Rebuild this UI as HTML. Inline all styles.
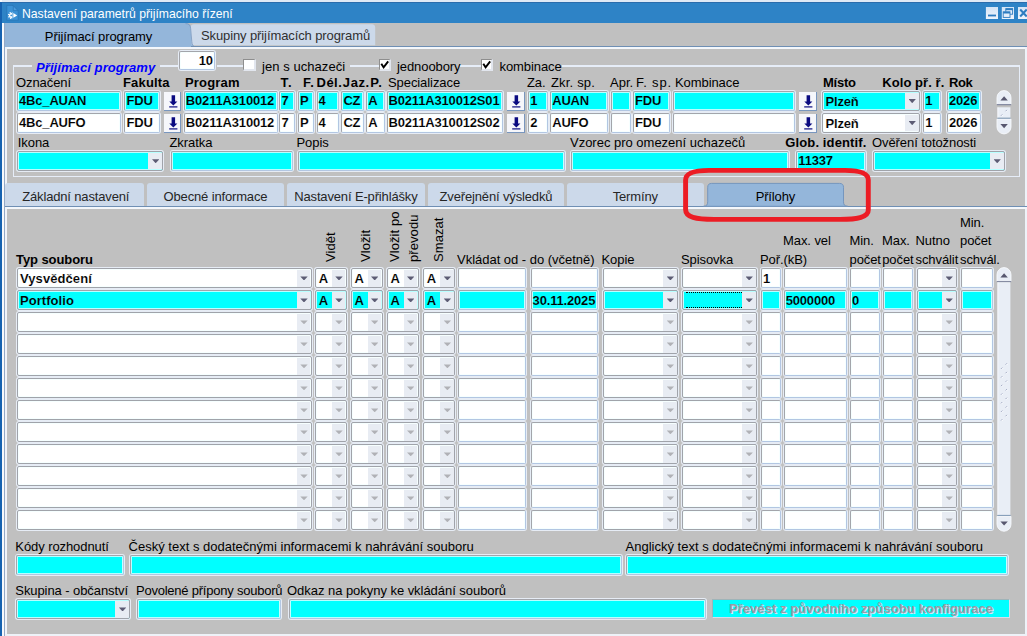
<!DOCTYPE html><html><head><meta charset="utf-8"><title>Nastavení parametrů přijímacího řízení</title><style>
html,body{margin:0;padding:0;}
body{width:1027px;height:636px;overflow:hidden;background:#c0c0c0;font-family:"Liberation Sans",sans-serif;font-size:12px;color:#000;position:relative;}
.a{position:absolute;white-space:nowrap;}
.f{position:absolute;box-sizing:border-box;border:1px solid #a3a5ab;border-right-color:#b2c6e2;border-bottom-color:#b2c6e2;border-radius:2px;box-shadow:0 0 0 1px #e6ecf5,inset 0 0 0 0.8px #f4ffff;font-weight:bold;font-size:13px;line-height:20px;padding-left:1px;letter-spacing:-0.17px;white-space:nowrap;overflow:hidden;height:20px;}
.l{position:absolute;white-space:nowrap;font-size:13px;line-height:14px;letter-spacing:-0.08px;}
.b{font-weight:bold;}
.btn{position:absolute;box-sizing:border-box;width:17.8px;height:18.6px;background:#f6f7fb;border-right:1px solid #7896be;border-bottom:1px solid #7896be;}
.dd{position:absolute;right:0.5px;top:0.8px;bottom:0.8px;width:13.5px;background:#e8ecf3;}
.dd:after{content:"";position:absolute;left:3.5px;top:6.300px;width:7.400px;height:4.100px;background:#5c5c74;clip-path:polygon(0 0,100% 0,50% 100%);}
.dd.dis:after{background:#b0b1b6;height:3.8px;}
.cb{padding-left:2.5px;border-color:#a0a3aa;}
.t{line-height:18px;}
.cb.t{line-height:19.5px;}
.tab{position:absolute;box-sizing:border-box;text-align:center;font-size:13px;}
</style></head><body>
<div class="a" style="left:0;top:0;width:1027px;height:23.1px;background:#2e83c6;"></div>
<div class="a" style="left:0;top:0;width:1027px;height:1.6px;background:#dfe9f5;"></div>
<div class="a" style="left:0;top:1.6px;width:1027px;height:1.2px;background:#2a6cac;"></div>
<div class="a" style="left:1.7px;top:23.1px;width:2.5px;height:613px;background:#f7f9fc;"></div>
<div class="a" style="left:4.2px;top:23.1px;width:0.8px;height:613px;background:#93a8c6;"></div>
<div class="a" style="left:0;top:0;width:1.7px;height:636px;background:#1662b0;"></div>
<div class="a" style="left:0;top:0;width:2px;height:2px;background:#f7f9fc;"></div>
<svg class="a" style="left:0;top:0" width="24" height="24" viewBox="0 0 24 24"><path d="M6.800 5.400h6.200l5.200 5.400v9.400h-11.400z" fill="#3b92d6" stroke="#2874b6" stroke-width="0.7"/><path d="M13.300 5.800v4.800h4.600z" fill="#4a9cdc" stroke="#2874b6" stroke-width="0.7"/><clipPath id="gc"><rect x="6" y="11" width="6.400" height="9"/></clipPath><g clip-path="url(#gc)"><circle cx="11.500" cy="15.400" r="2.900" fill="none" stroke="#fff" stroke-width="1.400" stroke-dasharray="1.200 1.080"/><circle cx="11.500" cy="15.400" r="2.500" fill="#fff"/><circle cx="11.200" cy="15.400" r="0.900" fill="#3b92d6"/></g><path d="M13.300 13.100l3.900 2.300l-3.900 2.400z" fill="#fff"/></svg>
<div class="a" style="left:22px;top:6.200px;color:#fff;font-size:12.2px;line-height:16px;">Nastavení parametrů přijímacího řízení</div>
<svg class="a" style="left:984px;top:5px" width="43" height="16" viewBox="0 0 43 16"><defs><linearGradient id="wb" x1="0" y1="0" x2="0" y2="1"><stop offset="0" stop-color="#d4e4f6"/><stop offset="1" stop-color="#eef4fc"/></linearGradient></defs><rect x="1.900" y="2" width="12.100" height="12" fill="url(#wb)"/><rect x="4" y="9.600" width="8" height="1.800" fill="#2e7cc0"/><rect x="17.800" y="2" width="12.200" height="12" fill="url(#wb)"/><rect x="21.800" y="3.600" width="6.800" height="5.600" fill="#e4eefa" stroke="#2e7cc0" stroke-width="0.900"/><rect x="21.800" y="3.600" width="6.800" height="1.600" fill="#2e7cc0"/><rect x="19.200" y="6.800" width="6.800" height="5.600" fill="#e4eefa" stroke="#2e7cc0" stroke-width="0.900"/><rect x="19.200" y="6.800" width="6.800" height="1.700" fill="#2e7cc0"/><rect x="34" y="2" width="12" height="12" fill="url(#wb)"/><path d="M36.200 4.500l6.500 7M42.700 4.500l-6.500 7" stroke="#2e7cc0" stroke-width="2"/></svg>
<svg class="a" style="left:5px;top:23px" width="375" height="24" viewBox="0 0 375 24"><path d="M186.400 22.5v-18.500c0-2-1-2.900-3-2.900h-183.400" fill="none"/><path d="M0 0.100h180.500c3.500 0 5 1.500 5.300 4.500l1.200 14c0.300 3 1 4.400 3 5.400h-190z" fill="#94b6da"/><path d="M186.800 22.300l-1.300-17c-0.200-2.500 1-4.100 3.500-4.100h178c1.800 0 3.200 1.200 3.200 3v18.100z" fill="#ccd9ea"/><path d="M180.500 0.600c3.500 0 4.800 1.500 5.100 4.500l1.200 13.500c0.300 3 1 4.400 3 5.400" fill="none" stroke="#7a98bf" stroke-width="0.8"/></svg>
<div class="tab" style="left:7px;top:23px;width:183px;height:24px;line-height:27.5px;font-size:13px;letter-spacing:-0.1px;">Přijímací programy</div>
<div class="tab" style="left:195px;top:24px;width:181px;height:22px;line-height:24px;font-size:13px;color:#303030;letter-spacing:-0.1px;">Skupiny přijímacích programů</div>
<div class="a" style="left:5px;top:46.900px;width:1022px;height:2.1px;background:#f4f7fb;"></div>
<div class="a" style="left:191px;top:46px;width:836px;height:1px;background:#6f8fb4;"></div>
<div class="a" style="left:5px;top:46.900px;width:2px;height:587px;background:#f1f4f9;"></div>
<div class="a" style="left:5px;top:633.6px;width:1022px;height:2.4px;background:#eef2f8;"></div>
<div class="a" style="left:1024.8px;top:47px;width:2.2px;height:589px;background:#eef2f8;"></div>
<div class="a" style="left:13px;top:65.300px;width:1007.1px;height:112.2px;box-sizing:border-box;border:1.7px solid #e6edf8;border-top:none;"></div>
<div class="a" style="left:13.0px;top:65.300px;width:18.8px;height:1.7px;background:#e6edf8;"></div>
<div class="a" style="left:159.7px;top:65.300px;width:18.3px;height:1.7px;background:#e6edf8;"></div>
<div class="a" style="left:216.5px;top:65.300px;width:27.2px;height:1.7px;background:#e6edf8;"></div>
<div class="a" style="left:349.6px;top:65.300px;width:29.4px;height:1.7px;background:#e6edf8;"></div>
<div class="a" style="left:460.3px;top:65.300px;width:20.7px;height:1.7px;background:#e6edf8;"></div>
<div class="a" style="left:562.0px;top:65.300px;width:458.1px;height:1.7px;background:#e6edf8;"></div>
<div class="a b" style="left:36px;top:59.500px;color:#0000ff;font-style:italic;font-size:13px;line-height:16px;letter-spacing:0.08px;">Přijímací programy</div>
<div class="f" style="left:178.800px;top:51.3px;width:36.5px;height:19px;background:#fff;text-align:right;padding-right:1.5px;line-height:18.5px;-webkit-text-stroke:0.12px #fff;">10</div>
<div class="a" style="left:243.3px;top:59.0px;width:12.4px;height:12.2px;background:#fff;border:1px solid #8e8e8e;border-right:2px solid #e2e6ee;border-bottom:2px solid #e2e6ee;box-sizing:border-box;"></div>
<div class="l" style="left:262.0px;top:60.3px;letter-spacing:0.06px;">jen s uchazeči</div>
<div class="a" style="left:378.8px;top:58.8px;width:12.4px;height:12.2px;background:#fff;border:1px solid #8e8e8e;border-right:2px solid #e2e6ee;border-bottom:2px solid #e2e6ee;box-sizing:border-box;"></div>
<svg class="a" style="left:378.8px;top:58.8px" width="12" height="12" viewBox="0 0 12 12"><path d="M2.300 4.700l2.300 3.600l4.600-6" fill="none" stroke="#000" stroke-width="1.900"/></svg>
<div class="l" style="left:397.0px;top:60.1px;letter-spacing:-0.08px;">jednoobory</div>
<div class="a" style="left:480.9px;top:58.8px;width:12.4px;height:12.2px;background:#fff;border:1px solid #8e8e8e;border-right:2px solid #e2e6ee;border-bottom:2px solid #e2e6ee;box-sizing:border-box;"></div>
<svg class="a" style="left:480.9px;top:58.8px" width="12" height="12" viewBox="0 0 12 12"><path d="M2.300 4.700l2.300 3.600l4.600-6" fill="none" stroke="#000" stroke-width="1.900"/></svg>
<div class="l" style="left:499.5px;top:60.1px;letter-spacing:-0.08px;">kombinace</div>
<div class="l" style="left:16.0px;top:76px;letter-spacing:-0.08px;">Označení</div>
<div class="l b" style="left:123.0px;top:76px;letter-spacing:0.17px;">Fakulta</div>
<div class="l b" style="left:185.0px;top:76px;letter-spacing:0.17px;">Program</div>
<div class="l b" style="left:280.6px;top:76px;letter-spacing:1.00px;">T.</div>
<div class="l b" style="left:303.0px;top:76px;letter-spacing:0.80px;">F.</div>
<div class="l b" style="left:316.5px;top:76px;letter-spacing:0.50px;">Dél.</div>
<div class="l b" style="left:342.8px;top:76px;letter-spacing:0.60px;">Jaz.</div>
<div class="l b" style="left:370.3px;top:76px;letter-spacing:1.00px;">P.</div>
<div class="l" style="left:388.0px;top:76px;letter-spacing:-0.08px;">Specializace</div>
<div class="l" style="left:527.0px;top:76px;letter-spacing:-0.08px;">Za.</div>
<div class="l" style="left:551.0px;top:76px;letter-spacing:0.17px;">Zkr. sp.</div>
<div class="l" style="left:610.0px;top:76px;letter-spacing:0.00px;">Apr.</div>
<div class="l" style="left:636.0px;top:76px;letter-spacing:0.80px;">F. sp.</div>
<div class="l" style="left:675.0px;top:76px;letter-spacing:-0.08px;">Kombinace</div>
<div class="l b" style="left:823.0px;top:76px;letter-spacing:-0.25px;">Místo</div>
<div class="l b" style="left:882.3px;top:76px;letter-spacing:0.06px;">Kolo př. ř.</div>
<div class="l b" style="left:949.0px;top:76px;letter-spacing:-0.40px;">Rok</div>
<div class="f t" style="left:17.0px;top:91px;width:104.0px;background:#00ffff;-webkit-text-stroke:0.12px #00ffff;">4Bc_AUAN</div>
<div class="f t" style="left:124.4px;top:91px;width:35.3px;background:#00ffff;-webkit-text-stroke:0.12px #00ffff;">FDU</div>
<div class="btn" style="left:163.7px;top:92.4px;"><svg style="position:absolute;left:0;top:0" width="17" height="18" viewBox="0 0 17 18"><path d="M7.600 3.300h3.500v6.100h2.300l-4.050 4l-4.050-4h2.300z" fill="#0a0a80"/><rect x="5.200" y="14.300" width="8.200" height="1.200" fill="#0a0a80"/></svg></div>
<div class="f t" style="left:183.8px;top:91px;width:94.4px;background:#00ffff;-webkit-text-stroke:0.12px #00ffff;">B0211A310012</div>
<div class="f t" style="left:279.4px;top:91px;width:16.0px;background:#00ffff;-webkit-text-stroke:0.12px #00ffff;">7</div>
<div class="f t" style="left:298.0px;top:91px;width:15.6px;background:#00ffff;-webkit-text-stroke:0.12px #00ffff;">P</div>
<div class="f t" style="left:316.6px;top:91px;width:22.4px;background:#00ffff;-webkit-text-stroke:0.12px #00ffff;">4</div>
<div class="f t" style="left:341.4px;top:91px;width:23.0px;background:#00ffff;-webkit-text-stroke:0.12px #00ffff;">CZ</div>
<div class="f t" style="left:366.2px;top:91px;width:19.0px;background:#00ffff;-webkit-text-stroke:0.12px #00ffff;">A</div>
<div class="f t" style="left:386.5px;top:91px;width:116.9px;background:#00ffff;-webkit-text-stroke:0.12px #00ffff;">B0211A310012S01</div>
<div class="btn" style="left:506.8px;top:92.4px;"><svg style="position:absolute;left:0;top:0" width="17" height="18" viewBox="0 0 17 18"><path d="M7.600 3.300h3.500v6.100h2.300l-4.050 4l-4.050-4h2.300z" fill="#0a0a80"/><rect x="5.200" y="14.300" width="8.200" height="1.200" fill="#0a0a80"/></svg></div>
<div class="f t" style="left:528.3px;top:91px;width:19.7px;background:#00ffff;-webkit-text-stroke:0.12px #00ffff;">1</div>
<div class="f t" style="left:550.2px;top:91px;width:57.5px;background:#00ffff;-webkit-text-stroke:0.12px #00ffff;">AUAN</div>
<div class="f t" style="left:611.0px;top:91px;width:20.0px;background:#00ffff;-webkit-text-stroke:0.12px #00ffff;"></div>
<div class="f t" style="left:633.0px;top:91px;width:37.0px;background:#00ffff;-webkit-text-stroke:0.12px #00ffff;">FDU</div>
<div class="f t" style="left:673.0px;top:91px;width:122.0px;background:#00ffff;-webkit-text-stroke:0.12px #00ffff;"></div>
<div class="btn" style="left:798.8px;top:92.4px;"><svg style="position:absolute;left:0;top:0" width="17" height="18" viewBox="0 0 17 18"><path d="M7.600 3.300h3.500v6.100h2.300l-4.050 4l-4.050-4h2.300z" fill="#0a0a80"/><rect x="5.200" y="14.300" width="8.200" height="1.200" fill="#0a0a80"/></svg></div>
<div class="f cb t" style="left:822.0px;top:91.0px;width:98.0px;height:20px;background:#00ffff;-webkit-text-stroke:0.12px #00ffff;">Plzeň<div class="dd"></div></div>
<div class="f t" style="left:923.2px;top:91px;width:17.5px;background:#00ffff;-webkit-text-stroke:0.12px #00ffff;">1</div>
<div class="f t" style="left:947.0px;top:91px;width:33.5px;background:#00ffff;-webkit-text-stroke:0.12px #00ffff;">2026</div>
<div class="f t" style="left:17.0px;top:113px;width:104.0px;background:#ffffff;-webkit-text-stroke:0.12px #ffffff;">4Bc_AUFO</div>
<div class="f t" style="left:124.4px;top:113px;width:35.3px;background:#ffffff;-webkit-text-stroke:0.12px #ffffff;">FDU</div>
<div class="btn" style="left:163.7px;top:114.4px;"><svg style="position:absolute;left:0;top:0" width="17" height="18" viewBox="0 0 17 18"><path d="M7.600 3.300h3.500v6.100h2.300l-4.050 4l-4.050-4h2.300z" fill="#0a0a80"/><rect x="5.200" y="14.300" width="8.200" height="1.200" fill="#0a0a80"/></svg></div>
<div class="f t" style="left:183.8px;top:113px;width:94.4px;background:#ffffff;-webkit-text-stroke:0.12px #ffffff;">B0211A310012</div>
<div class="f t" style="left:279.4px;top:113px;width:16.0px;background:#ffffff;-webkit-text-stroke:0.12px #ffffff;">7</div>
<div class="f t" style="left:298.0px;top:113px;width:15.6px;background:#ffffff;-webkit-text-stroke:0.12px #ffffff;">P</div>
<div class="f t" style="left:316.6px;top:113px;width:22.4px;background:#ffffff;-webkit-text-stroke:0.12px #ffffff;">4</div>
<div class="f t" style="left:341.4px;top:113px;width:23.0px;background:#ffffff;-webkit-text-stroke:0.12px #ffffff;">CZ</div>
<div class="f t" style="left:366.2px;top:113px;width:19.0px;background:#ffffff;-webkit-text-stroke:0.12px #ffffff;">A</div>
<div class="f t" style="left:386.5px;top:113px;width:116.9px;background:#ffffff;-webkit-text-stroke:0.12px #ffffff;">B0211A310012S02</div>
<div class="btn" style="left:506.8px;top:114.4px;"><svg style="position:absolute;left:0;top:0" width="17" height="18" viewBox="0 0 17 18"><path d="M7.600 3.300h3.500v6.100h2.300l-4.050 4l-4.050-4h2.300z" fill="#0a0a80"/><rect x="5.200" y="14.300" width="8.200" height="1.200" fill="#0a0a80"/></svg></div>
<div class="f t" style="left:528.3px;top:113px;width:19.7px;background:#ffffff;-webkit-text-stroke:0.12px #ffffff;">2</div>
<div class="f t" style="left:550.2px;top:113px;width:57.5px;background:#ffffff;-webkit-text-stroke:0.12px #ffffff;">AUFO</div>
<div class="f t" style="left:611.0px;top:113px;width:20.0px;background:#ffffff;-webkit-text-stroke:0.12px #ffffff;"></div>
<div class="f t" style="left:633.0px;top:113px;width:37.0px;background:#ffffff;-webkit-text-stroke:0.12px #ffffff;">FDU</div>
<div class="f t" style="left:673.0px;top:113px;width:122.0px;background:#ffffff;-webkit-text-stroke:0.12px #ffffff;"></div>
<div class="btn" style="left:798.8px;top:114.4px;"><svg style="position:absolute;left:0;top:0" width="17" height="18" viewBox="0 0 17 18"><path d="M7.600 3.300h3.500v6.100h2.300l-4.050 4l-4.050-4h2.300z" fill="#0a0a80"/><rect x="5.200" y="14.300" width="8.200" height="1.200" fill="#0a0a80"/></svg></div>
<div class="f cb t" style="left:822.0px;top:113.0px;width:98.0px;height:20px;background:#ffffff;-webkit-text-stroke:0.12px #ffffff;">Plzeň<div class="dd"></div></div>
<div class="f t" style="left:923.2px;top:113px;width:17.5px;background:#ffffff;-webkit-text-stroke:0.12px #ffffff;">1</div>
<div class="f t" style="left:947.0px;top:113px;width:33.5px;background:#ffffff;-webkit-text-stroke:0.12px #ffffff;">2026</div>
<svg class="a" style="left:995.7px;top:89.6px" width="17" height="45" viewBox="0 0 17 45"><path d="M1.0 14.4v-6.800a6.600 6.600 0 0 1 14.0 0v6.800z" fill="#e9eef6" stroke="#f7f9fd" stroke-width="0.9"/><path d="M0.8 14.7h14.4" stroke="#5f6684" stroke-width="0.9"/><path d="M4.4 10.5l3.700-4.200l3.700 4.200z" fill="#57576f"/><path d="M1.0 29.1v7.800a6.600 6.600 0 0 0 14.0 0v-7.800z" fill="#e9eef6" stroke="#f7f9fd" stroke-width="0.9"/><path d="M4.4 34.1l3.700 4.200l3.700-4.200z" fill="#57576f"/><rect x="1.6" y="17.3" width="12.8" height="10.5" fill="#e9eef6"/><path d="M1.9 17.3v10.5" stroke="#f7f9fd" stroke-width="0.9"/><path d="M1.4 28.2h13.2" stroke="#7896b8" stroke-width="0.9"/><path d="M9.6 21.2l1.300-1.300M5.0 25.7l1.300-1.300" stroke="#9aa2bc" stroke-width="0.9" fill="none"/><path d="M10.5 21.7l1.300-1.300M5.9 26.2l1.300-1.300" stroke="#ffffff" stroke-width="0.8" fill="none"/></svg>
<div class="l" style="left:17.8px;top:136px;letter-spacing:-0.08px;">Ikona</div>
<div class="l" style="left:169.5px;top:136px;letter-spacing:-0.08px;">Zkratka</div>
<div class="l" style="left:296.5px;top:136px;letter-spacing:-0.08px;">Popis</div>
<div class="l" style="left:570.0px;top:136px;letter-spacing:-0.01px;">Vzorec pro omezení uchazečů</div>
<div class="l b" style="left:785.3px;top:136px;letter-spacing:0.12px;">Glob. identif.</div>
<div class="l" style="left:872.0px;top:136px;letter-spacing:-0.08px;">Ověření totožnosti</div>
<div class="f cb t" style="left:17.2px;top:151.1px;width:146.3px;height:20px;background:#00ffff;-webkit-text-stroke:0.12px #00ffff;"><div class="dd"></div></div>
<div class="f t" style="left:171.0px;top:151.100px;width:122.0px;background:#00ffff;-webkit-text-stroke:0.12px #00ffff;"></div>
<div class="f t" style="left:298.3px;top:151.100px;width:266.7px;background:#00ffff;-webkit-text-stroke:0.12px #00ffff;"></div>
<div class="f t" style="left:570.7px;top:151.100px;width:218.3px;background:#00ffff;-webkit-text-stroke:0.12px #00ffff;"></div>
<div class="f t" style="left:796.3px;top:151.100px;width:70.2px;background:#00ffff;-webkit-text-stroke:0.12px #00ffff;">11337</div>
<div class="f cb t" style="left:872.5px;top:151.1px;width:132.5px;height:20px;background:#00ffff;-webkit-text-stroke:0.12px #00ffff;"><div class="dd"></div></div>
<div class="tab" style="left:4.5px;top:182.7px;width:139.5px;height:23.2px;background:#ccd9ea;border-radius:3px 3px 0 0;line-height:27px;color:#262626;letter-spacing:-0.15px;padding-left:3px;">Základní nastavení</div>
<div class="tab" style="left:147.2px;top:182.7px;width:136.6px;height:23.2px;background:#ccd9ea;border-radius:3px 3px 0 0;line-height:27px;color:#262626;letter-spacing:-0.15px;padding-left:0px;">Obecné informace</div>
<div class="tab" style="left:287.2px;top:182.7px;width:137.4px;height:23.2px;background:#ccd9ea;border-radius:3px 3px 0 0;line-height:27px;color:#262626;letter-spacing:-0.15px;padding-left:0px;">Nastavení E-přihlášky</div>
<div class="tab" style="left:427.9px;top:182.7px;width:136.1px;height:23.2px;background:#ccd9ea;border-radius:3px 3px 0 0;line-height:27px;color:#262626;letter-spacing:-0.15px;padding-left:0px;">Zveřejnění výsledků</div>
<div class="tab" style="left:566.6px;top:182.7px;width:137.4px;height:23.2px;background:#ccd9ea;border-radius:3px 3px 0 0;line-height:27px;color:#262626;letter-spacing:-0.15px;padding-left:0px;">Termíny</div>
<div class="a" style="left:5px;top:205.8px;width:1022px;height:1px;background:#6f8fb4;"></div>
<div class="a" style="left:5px;top:206.8px;width:1022px;height:2px;background:#f4f7fb;"></div>
<svg class="a" style="left:700px;top:180px" width="150" height="28" viewBox="0 0 150 28"><path d="M3.5 26.3c3 0 4.2-1.500 4.200-4.500v-14.500c0-2.600 1.300-3.900 3.900-3.900h128c2.600 0 3.900 1.300 3.900 3.900v14.500c0 3 1.200 4.500 4.200 4.500z" fill="#94b6da" stroke="#7596be" stroke-width="1"/></svg>
<div class="tab" style="left:706.8px;top:183px;width:137.200px;height:23px;line-height:27px;letter-spacing:-0.15px;">Přílohy</div>
<svg class="a" style="left:0;top:0" width="1027" height="230" viewBox="0 0 1027 230"><path d="M709 170.4L845 170.4C859 170.4 868.3 172.500 868.3 180L868.3 210C868.3 217 858 219.4 840 219.4L714 219.4C696 219.4 685.6 217.5 685.6 209.500L685.6 180C685.6 172.500 696 170.4 709 170.4Z" fill="none" stroke="#ec1c24" stroke-width="4.900" stroke-linejoin="round"/></svg>
<div class="l b" style="left:16px;top:252.6px;">Typ souboru</div>
<div class="l" style="left:324px;top:262px;transform-origin:0 0;transform:rotate(-90deg);letter-spacing:0.08px;">Vidět</div>
<div class="l" style="left:359px;top:262px;transform-origin:0 0;transform:rotate(-90deg);letter-spacing:0.08px;">Vložit</div>
<div class="l" style="left:388px;top:262px;transform-origin:0 0;transform:rotate(-90deg);letter-spacing:0.08px;">Vložit po</div>
<div class="l" style="left:407px;top:262px;transform-origin:0 0;transform:rotate(-90deg);letter-spacing:0.08px;">převodu</div>
<div class="l" style="left:432px;top:262px;transform-origin:0 0;transform:rotate(-90deg);letter-spacing:0.08px;">Smazat</div>
<div class="l" style="left:457.0px;top:252.6px;"><span style="letter-spacing:-0.02px">Vkládat od - do (včetně)</span></div>
<div class="l" style="left:601.5px;top:252.6px;">Kopie</div>
<div class="l" style="left:681.0px;top:252.6px;">Spisovka</div>
<div class="l" style="left:760.0px;top:252.6px;">Poř.</div>
<div class="l" style="left:783.0px;top:234.4px;">Max. vel</div>
<div class="l" style="left:783.5px;top:252.6px;">(kB)</div>
<div class="l" style="left:849.5px;top:234.4px;">Min.</div>
<div class="l" style="left:849.5px;top:252.6px;">počet</div>
<div class="l" style="left:882.0px;top:234.4px;">Max.</div>
<div class="l" style="left:882.2px;top:252.6px;">počet</div>
<div class="l" style="left:915.5px;top:234.4px;">Nutno</div>
<div class="l" style="left:915.5px;top:252.6px;">schválit</div>
<div class="l" style="left:960.0px;top:216.0px;">Min.</div>
<div class="l" style="left:960.0px;top:234.4px;">počet</div>
<div class="l" style="left:960.0px;top:252.6px;">schvál.</div>
<div class="f cb" style="left:16.5px;top:268.3px;width:295.3px;background:#ffffff;-webkit-text-stroke:0.12px #ffffff;letter-spacing:0.08px;">Vysvědčení<div class="dd"></div></div>
<div class="f cb" style="left:315.3px;top:268.3px;width:31.5px;background:#ffffff;-webkit-text-stroke:0.12px #ffffff;">A<div class="dd"></div></div>
<div class="f cb" style="left:351.0px;top:268.3px;width:31.5px;background:#ffffff;-webkit-text-stroke:0.12px #ffffff;">A<div class="dd"></div></div>
<div class="f cb" style="left:387.0px;top:268.3px;width:31.5px;background:#ffffff;-webkit-text-stroke:0.12px #ffffff;">A<div class="dd"></div></div>
<div class="f cb" style="left:423.3px;top:268.3px;width:31.9px;background:#ffffff;-webkit-text-stroke:0.12px #ffffff;">A<div class="dd"></div></div>
<div class="f" style="left:458.0px;top:268.3px;width:68.0px;background:#ffffff;-webkit-text-stroke:0.12px #ffffff;"></div>
<div class="f" style="left:530.6px;top:268.3px;width:67.4px;background:#ffffff;-webkit-text-stroke:0.12px #ffffff;"></div>
<div class="f cb" style="left:602.5px;top:268.3px;width:75.7px;background:#ffffff;-webkit-text-stroke:0.12px #ffffff;"><div class="dd"></div></div>
<div class="f cb" style="left:682.0px;top:268.3px;width:75.0px;background:#ffffff;-webkit-text-stroke:0.12px #ffffff;"><div class="dd"></div></div>
<div class="f" style="left:761.0px;top:268.3px;width:20.0px;background:#ffffff;-webkit-text-stroke:0.12px #ffffff;">1</div>
<div class="f" style="left:783.7px;top:268.3px;width:63.1px;background:#ffffff;-webkit-text-stroke:0.12px #ffffff;"></div>
<div class="f" style="left:850.0px;top:268.3px;width:30.0px;background:#ffffff;-webkit-text-stroke:0.12px #ffffff;"></div>
<div class="f" style="left:883.0px;top:268.3px;width:30.3px;background:#ffffff;-webkit-text-stroke:0.12px #ffffff;"></div>
<div class="f cb" style="left:916.5px;top:268.3px;width:40.5px;background:#ffffff;-webkit-text-stroke:0.12px #ffffff;"><div class="dd"></div></div>
<div class="f" style="left:961.0px;top:268.3px;width:32.0px;background:#ffffff;-webkit-text-stroke:0.12px #ffffff;"></div>
<div class="f cb" style="left:16.5px;top:290.3px;width:295.3px;background:#00ffff;-webkit-text-stroke:0.12px #00ffff;letter-spacing:0.05px;">Portfolio<div class="dd"></div></div>
<div class="f cb" style="left:315.3px;top:290.3px;width:31.5px;background:#00ffff;-webkit-text-stroke:0.12px #00ffff;">A<div class="dd"></div></div>
<div class="f cb" style="left:351.0px;top:290.3px;width:31.5px;background:#00ffff;-webkit-text-stroke:0.12px #00ffff;">A<div class="dd"></div></div>
<div class="f cb" style="left:387.0px;top:290.3px;width:31.5px;background:#00ffff;-webkit-text-stroke:0.12px #00ffff;">A<div class="dd"></div></div>
<div class="f cb" style="left:423.3px;top:290.3px;width:31.9px;background:#00ffff;-webkit-text-stroke:0.12px #00ffff;">A<div class="dd"></div></div>
<div class="f" style="left:458.0px;top:290.3px;width:68.0px;background:#00ffff;-webkit-text-stroke:0.12px #00ffff;"></div>
<div class="f" style="left:530.6px;top:290.3px;width:67.4px;background:#00ffff;-webkit-text-stroke:0.12px #00ffff;">30.11.2025</div>
<div class="f cb" style="left:602.5px;top:290.3px;width:75.7px;background:#00ffff;-webkit-text-stroke:0.12px #00ffff;"><div class="dd"></div></div>
<div class="f cb" style="left:682.0px;top:290.3px;width:75.0px;background:#00ffff;-webkit-text-stroke:0.12px #00ffff;"><div class="dd"></div></div>
<div class="f" style="left:761.0px;top:290.3px;width:20.0px;background:#00ffff;-webkit-text-stroke:0.12px #00ffff;"></div>
<div class="f" style="left:783.7px;top:290.3px;width:63.1px;background:#00ffff;-webkit-text-stroke:0.12px #00ffff;">5000000</div>
<div class="f" style="left:850.0px;top:290.3px;width:30.0px;background:#00ffff;-webkit-text-stroke:0.12px #00ffff;">0</div>
<div class="f" style="left:883.0px;top:290.3px;width:30.3px;background:#00ffff;-webkit-text-stroke:0.12px #00ffff;"></div>
<div class="f cb" style="left:916.5px;top:290.3px;width:40.5px;background:#00ffff;-webkit-text-stroke:0.12px #00ffff;"><div class="dd"></div></div>
<div class="f" style="left:961.0px;top:290.3px;width:32.0px;background:#00ffff;-webkit-text-stroke:0.12px #00ffff;"></div>
<div class="f cb" style="left:16.5px;top:312.3px;width:295.3px;background:#ffffff;-webkit-text-stroke:0.12px #ffffff;"><div class="dd dis"></div></div>
<div class="f cb" style="left:315.3px;top:312.3px;width:31.5px;background:#ffffff;-webkit-text-stroke:0.12px #ffffff;"><div class="dd dis"></div></div>
<div class="f cb" style="left:351.0px;top:312.3px;width:31.5px;background:#ffffff;-webkit-text-stroke:0.12px #ffffff;"><div class="dd dis"></div></div>
<div class="f cb" style="left:387.0px;top:312.3px;width:31.5px;background:#ffffff;-webkit-text-stroke:0.12px #ffffff;"><div class="dd dis"></div></div>
<div class="f cb" style="left:423.3px;top:312.3px;width:31.9px;background:#ffffff;-webkit-text-stroke:0.12px #ffffff;"><div class="dd dis"></div></div>
<div class="f" style="left:458.0px;top:312.3px;width:68.0px;background:#ffffff;-webkit-text-stroke:0.12px #ffffff;"></div>
<div class="f" style="left:530.6px;top:312.3px;width:67.4px;background:#ffffff;-webkit-text-stroke:0.12px #ffffff;"></div>
<div class="f cb" style="left:602.5px;top:312.3px;width:75.7px;background:#ffffff;-webkit-text-stroke:0.12px #ffffff;"><div class="dd dis"></div></div>
<div class="f cb" style="left:682.0px;top:312.3px;width:75.0px;background:#ffffff;-webkit-text-stroke:0.12px #ffffff;"><div class="dd dis"></div></div>
<div class="f" style="left:761.0px;top:312.3px;width:20.0px;background:#ffffff;-webkit-text-stroke:0.12px #ffffff;"></div>
<div class="f" style="left:783.7px;top:312.3px;width:63.1px;background:#ffffff;-webkit-text-stroke:0.12px #ffffff;"></div>
<div class="f" style="left:850.0px;top:312.3px;width:30.0px;background:#ffffff;-webkit-text-stroke:0.12px #ffffff;"></div>
<div class="f" style="left:883.0px;top:312.3px;width:30.3px;background:#ffffff;-webkit-text-stroke:0.12px #ffffff;"></div>
<div class="f cb" style="left:916.5px;top:312.3px;width:40.5px;background:#ffffff;-webkit-text-stroke:0.12px #ffffff;"><div class="dd dis"></div></div>
<div class="f" style="left:961.0px;top:312.3px;width:32.0px;background:#ffffff;-webkit-text-stroke:0.12px #ffffff;"></div>
<div class="f cb" style="left:16.5px;top:334.3px;width:295.3px;background:#ffffff;-webkit-text-stroke:0.12px #ffffff;"><div class="dd dis"></div></div>
<div class="f cb" style="left:315.3px;top:334.3px;width:31.5px;background:#ffffff;-webkit-text-stroke:0.12px #ffffff;"><div class="dd dis"></div></div>
<div class="f cb" style="left:351.0px;top:334.3px;width:31.5px;background:#ffffff;-webkit-text-stroke:0.12px #ffffff;"><div class="dd dis"></div></div>
<div class="f cb" style="left:387.0px;top:334.3px;width:31.5px;background:#ffffff;-webkit-text-stroke:0.12px #ffffff;"><div class="dd dis"></div></div>
<div class="f cb" style="left:423.3px;top:334.3px;width:31.9px;background:#ffffff;-webkit-text-stroke:0.12px #ffffff;"><div class="dd dis"></div></div>
<div class="f" style="left:458.0px;top:334.3px;width:68.0px;background:#ffffff;-webkit-text-stroke:0.12px #ffffff;"></div>
<div class="f" style="left:530.6px;top:334.3px;width:67.4px;background:#ffffff;-webkit-text-stroke:0.12px #ffffff;"></div>
<div class="f cb" style="left:602.5px;top:334.3px;width:75.7px;background:#ffffff;-webkit-text-stroke:0.12px #ffffff;"><div class="dd dis"></div></div>
<div class="f cb" style="left:682.0px;top:334.3px;width:75.0px;background:#ffffff;-webkit-text-stroke:0.12px #ffffff;"><div class="dd dis"></div></div>
<div class="f" style="left:761.0px;top:334.3px;width:20.0px;background:#ffffff;-webkit-text-stroke:0.12px #ffffff;"></div>
<div class="f" style="left:783.7px;top:334.3px;width:63.1px;background:#ffffff;-webkit-text-stroke:0.12px #ffffff;"></div>
<div class="f" style="left:850.0px;top:334.3px;width:30.0px;background:#ffffff;-webkit-text-stroke:0.12px #ffffff;"></div>
<div class="f" style="left:883.0px;top:334.3px;width:30.3px;background:#ffffff;-webkit-text-stroke:0.12px #ffffff;"></div>
<div class="f cb" style="left:916.5px;top:334.3px;width:40.5px;background:#ffffff;-webkit-text-stroke:0.12px #ffffff;"><div class="dd dis"></div></div>
<div class="f" style="left:961.0px;top:334.3px;width:32.0px;background:#ffffff;-webkit-text-stroke:0.12px #ffffff;"></div>
<div class="f cb" style="left:16.5px;top:356.3px;width:295.3px;background:#ffffff;-webkit-text-stroke:0.12px #ffffff;"><div class="dd dis"></div></div>
<div class="f cb" style="left:315.3px;top:356.3px;width:31.5px;background:#ffffff;-webkit-text-stroke:0.12px #ffffff;"><div class="dd dis"></div></div>
<div class="f cb" style="left:351.0px;top:356.3px;width:31.5px;background:#ffffff;-webkit-text-stroke:0.12px #ffffff;"><div class="dd dis"></div></div>
<div class="f cb" style="left:387.0px;top:356.3px;width:31.5px;background:#ffffff;-webkit-text-stroke:0.12px #ffffff;"><div class="dd dis"></div></div>
<div class="f cb" style="left:423.3px;top:356.3px;width:31.9px;background:#ffffff;-webkit-text-stroke:0.12px #ffffff;"><div class="dd dis"></div></div>
<div class="f" style="left:458.0px;top:356.3px;width:68.0px;background:#ffffff;-webkit-text-stroke:0.12px #ffffff;"></div>
<div class="f" style="left:530.6px;top:356.3px;width:67.4px;background:#ffffff;-webkit-text-stroke:0.12px #ffffff;"></div>
<div class="f cb" style="left:602.5px;top:356.3px;width:75.7px;background:#ffffff;-webkit-text-stroke:0.12px #ffffff;"><div class="dd dis"></div></div>
<div class="f cb" style="left:682.0px;top:356.3px;width:75.0px;background:#ffffff;-webkit-text-stroke:0.12px #ffffff;"><div class="dd dis"></div></div>
<div class="f" style="left:761.0px;top:356.3px;width:20.0px;background:#ffffff;-webkit-text-stroke:0.12px #ffffff;"></div>
<div class="f" style="left:783.7px;top:356.3px;width:63.1px;background:#ffffff;-webkit-text-stroke:0.12px #ffffff;"></div>
<div class="f" style="left:850.0px;top:356.3px;width:30.0px;background:#ffffff;-webkit-text-stroke:0.12px #ffffff;"></div>
<div class="f" style="left:883.0px;top:356.3px;width:30.3px;background:#ffffff;-webkit-text-stroke:0.12px #ffffff;"></div>
<div class="f cb" style="left:916.5px;top:356.3px;width:40.5px;background:#ffffff;-webkit-text-stroke:0.12px #ffffff;"><div class="dd dis"></div></div>
<div class="f" style="left:961.0px;top:356.3px;width:32.0px;background:#ffffff;-webkit-text-stroke:0.12px #ffffff;"></div>
<div class="f cb" style="left:16.5px;top:378.3px;width:295.3px;background:#ffffff;-webkit-text-stroke:0.12px #ffffff;"><div class="dd dis"></div></div>
<div class="f cb" style="left:315.3px;top:378.3px;width:31.5px;background:#ffffff;-webkit-text-stroke:0.12px #ffffff;"><div class="dd dis"></div></div>
<div class="f cb" style="left:351.0px;top:378.3px;width:31.5px;background:#ffffff;-webkit-text-stroke:0.12px #ffffff;"><div class="dd dis"></div></div>
<div class="f cb" style="left:387.0px;top:378.3px;width:31.5px;background:#ffffff;-webkit-text-stroke:0.12px #ffffff;"><div class="dd dis"></div></div>
<div class="f cb" style="left:423.3px;top:378.3px;width:31.9px;background:#ffffff;-webkit-text-stroke:0.12px #ffffff;"><div class="dd dis"></div></div>
<div class="f" style="left:458.0px;top:378.3px;width:68.0px;background:#ffffff;-webkit-text-stroke:0.12px #ffffff;"></div>
<div class="f" style="left:530.6px;top:378.3px;width:67.4px;background:#ffffff;-webkit-text-stroke:0.12px #ffffff;"></div>
<div class="f cb" style="left:602.5px;top:378.3px;width:75.7px;background:#ffffff;-webkit-text-stroke:0.12px #ffffff;"><div class="dd dis"></div></div>
<div class="f cb" style="left:682.0px;top:378.3px;width:75.0px;background:#ffffff;-webkit-text-stroke:0.12px #ffffff;"><div class="dd dis"></div></div>
<div class="f" style="left:761.0px;top:378.3px;width:20.0px;background:#ffffff;-webkit-text-stroke:0.12px #ffffff;"></div>
<div class="f" style="left:783.7px;top:378.3px;width:63.1px;background:#ffffff;-webkit-text-stroke:0.12px #ffffff;"></div>
<div class="f" style="left:850.0px;top:378.3px;width:30.0px;background:#ffffff;-webkit-text-stroke:0.12px #ffffff;"></div>
<div class="f" style="left:883.0px;top:378.3px;width:30.3px;background:#ffffff;-webkit-text-stroke:0.12px #ffffff;"></div>
<div class="f cb" style="left:916.5px;top:378.3px;width:40.5px;background:#ffffff;-webkit-text-stroke:0.12px #ffffff;"><div class="dd dis"></div></div>
<div class="f" style="left:961.0px;top:378.3px;width:32.0px;background:#ffffff;-webkit-text-stroke:0.12px #ffffff;"></div>
<div class="f cb" style="left:16.5px;top:400.3px;width:295.3px;background:#ffffff;-webkit-text-stroke:0.12px #ffffff;"><div class="dd dis"></div></div>
<div class="f cb" style="left:315.3px;top:400.3px;width:31.5px;background:#ffffff;-webkit-text-stroke:0.12px #ffffff;"><div class="dd dis"></div></div>
<div class="f cb" style="left:351.0px;top:400.3px;width:31.5px;background:#ffffff;-webkit-text-stroke:0.12px #ffffff;"><div class="dd dis"></div></div>
<div class="f cb" style="left:387.0px;top:400.3px;width:31.5px;background:#ffffff;-webkit-text-stroke:0.12px #ffffff;"><div class="dd dis"></div></div>
<div class="f cb" style="left:423.3px;top:400.3px;width:31.9px;background:#ffffff;-webkit-text-stroke:0.12px #ffffff;"><div class="dd dis"></div></div>
<div class="f" style="left:458.0px;top:400.3px;width:68.0px;background:#ffffff;-webkit-text-stroke:0.12px #ffffff;"></div>
<div class="f" style="left:530.6px;top:400.3px;width:67.4px;background:#ffffff;-webkit-text-stroke:0.12px #ffffff;"></div>
<div class="f cb" style="left:602.5px;top:400.3px;width:75.7px;background:#ffffff;-webkit-text-stroke:0.12px #ffffff;"><div class="dd dis"></div></div>
<div class="f cb" style="left:682.0px;top:400.3px;width:75.0px;background:#ffffff;-webkit-text-stroke:0.12px #ffffff;"><div class="dd dis"></div></div>
<div class="f" style="left:761.0px;top:400.3px;width:20.0px;background:#ffffff;-webkit-text-stroke:0.12px #ffffff;"></div>
<div class="f" style="left:783.7px;top:400.3px;width:63.1px;background:#ffffff;-webkit-text-stroke:0.12px #ffffff;"></div>
<div class="f" style="left:850.0px;top:400.3px;width:30.0px;background:#ffffff;-webkit-text-stroke:0.12px #ffffff;"></div>
<div class="f" style="left:883.0px;top:400.3px;width:30.3px;background:#ffffff;-webkit-text-stroke:0.12px #ffffff;"></div>
<div class="f cb" style="left:916.5px;top:400.3px;width:40.5px;background:#ffffff;-webkit-text-stroke:0.12px #ffffff;"><div class="dd dis"></div></div>
<div class="f" style="left:961.0px;top:400.3px;width:32.0px;background:#ffffff;-webkit-text-stroke:0.12px #ffffff;"></div>
<div class="f cb" style="left:16.5px;top:422.3px;width:295.3px;background:#ffffff;-webkit-text-stroke:0.12px #ffffff;"><div class="dd dis"></div></div>
<div class="f cb" style="left:315.3px;top:422.3px;width:31.5px;background:#ffffff;-webkit-text-stroke:0.12px #ffffff;"><div class="dd dis"></div></div>
<div class="f cb" style="left:351.0px;top:422.3px;width:31.5px;background:#ffffff;-webkit-text-stroke:0.12px #ffffff;"><div class="dd dis"></div></div>
<div class="f cb" style="left:387.0px;top:422.3px;width:31.5px;background:#ffffff;-webkit-text-stroke:0.12px #ffffff;"><div class="dd dis"></div></div>
<div class="f cb" style="left:423.3px;top:422.3px;width:31.9px;background:#ffffff;-webkit-text-stroke:0.12px #ffffff;"><div class="dd dis"></div></div>
<div class="f" style="left:458.0px;top:422.3px;width:68.0px;background:#ffffff;-webkit-text-stroke:0.12px #ffffff;"></div>
<div class="f" style="left:530.6px;top:422.3px;width:67.4px;background:#ffffff;-webkit-text-stroke:0.12px #ffffff;"></div>
<div class="f cb" style="left:602.5px;top:422.3px;width:75.7px;background:#ffffff;-webkit-text-stroke:0.12px #ffffff;"><div class="dd dis"></div></div>
<div class="f cb" style="left:682.0px;top:422.3px;width:75.0px;background:#ffffff;-webkit-text-stroke:0.12px #ffffff;"><div class="dd dis"></div></div>
<div class="f" style="left:761.0px;top:422.3px;width:20.0px;background:#ffffff;-webkit-text-stroke:0.12px #ffffff;"></div>
<div class="f" style="left:783.7px;top:422.3px;width:63.1px;background:#ffffff;-webkit-text-stroke:0.12px #ffffff;"></div>
<div class="f" style="left:850.0px;top:422.3px;width:30.0px;background:#ffffff;-webkit-text-stroke:0.12px #ffffff;"></div>
<div class="f" style="left:883.0px;top:422.3px;width:30.3px;background:#ffffff;-webkit-text-stroke:0.12px #ffffff;"></div>
<div class="f cb" style="left:916.5px;top:422.3px;width:40.5px;background:#ffffff;-webkit-text-stroke:0.12px #ffffff;"><div class="dd dis"></div></div>
<div class="f" style="left:961.0px;top:422.3px;width:32.0px;background:#ffffff;-webkit-text-stroke:0.12px #ffffff;"></div>
<div class="f cb" style="left:16.5px;top:444.3px;width:295.3px;background:#ffffff;-webkit-text-stroke:0.12px #ffffff;"><div class="dd dis"></div></div>
<div class="f cb" style="left:315.3px;top:444.3px;width:31.5px;background:#ffffff;-webkit-text-stroke:0.12px #ffffff;"><div class="dd dis"></div></div>
<div class="f cb" style="left:351.0px;top:444.3px;width:31.5px;background:#ffffff;-webkit-text-stroke:0.12px #ffffff;"><div class="dd dis"></div></div>
<div class="f cb" style="left:387.0px;top:444.3px;width:31.5px;background:#ffffff;-webkit-text-stroke:0.12px #ffffff;"><div class="dd dis"></div></div>
<div class="f cb" style="left:423.3px;top:444.3px;width:31.9px;background:#ffffff;-webkit-text-stroke:0.12px #ffffff;"><div class="dd dis"></div></div>
<div class="f" style="left:458.0px;top:444.3px;width:68.0px;background:#ffffff;-webkit-text-stroke:0.12px #ffffff;"></div>
<div class="f" style="left:530.6px;top:444.3px;width:67.4px;background:#ffffff;-webkit-text-stroke:0.12px #ffffff;"></div>
<div class="f cb" style="left:602.5px;top:444.3px;width:75.7px;background:#ffffff;-webkit-text-stroke:0.12px #ffffff;"><div class="dd dis"></div></div>
<div class="f cb" style="left:682.0px;top:444.3px;width:75.0px;background:#ffffff;-webkit-text-stroke:0.12px #ffffff;"><div class="dd dis"></div></div>
<div class="f" style="left:761.0px;top:444.3px;width:20.0px;background:#ffffff;-webkit-text-stroke:0.12px #ffffff;"></div>
<div class="f" style="left:783.7px;top:444.3px;width:63.1px;background:#ffffff;-webkit-text-stroke:0.12px #ffffff;"></div>
<div class="f" style="left:850.0px;top:444.3px;width:30.0px;background:#ffffff;-webkit-text-stroke:0.12px #ffffff;"></div>
<div class="f" style="left:883.0px;top:444.3px;width:30.3px;background:#ffffff;-webkit-text-stroke:0.12px #ffffff;"></div>
<div class="f cb" style="left:916.5px;top:444.3px;width:40.5px;background:#ffffff;-webkit-text-stroke:0.12px #ffffff;"><div class="dd dis"></div></div>
<div class="f" style="left:961.0px;top:444.3px;width:32.0px;background:#ffffff;-webkit-text-stroke:0.12px #ffffff;"></div>
<div class="f cb" style="left:16.5px;top:466.3px;width:295.3px;background:#ffffff;-webkit-text-stroke:0.12px #ffffff;"><div class="dd dis"></div></div>
<div class="f cb" style="left:315.3px;top:466.3px;width:31.5px;background:#ffffff;-webkit-text-stroke:0.12px #ffffff;"><div class="dd dis"></div></div>
<div class="f cb" style="left:351.0px;top:466.3px;width:31.5px;background:#ffffff;-webkit-text-stroke:0.12px #ffffff;"><div class="dd dis"></div></div>
<div class="f cb" style="left:387.0px;top:466.3px;width:31.5px;background:#ffffff;-webkit-text-stroke:0.12px #ffffff;"><div class="dd dis"></div></div>
<div class="f cb" style="left:423.3px;top:466.3px;width:31.9px;background:#ffffff;-webkit-text-stroke:0.12px #ffffff;"><div class="dd dis"></div></div>
<div class="f" style="left:458.0px;top:466.3px;width:68.0px;background:#ffffff;-webkit-text-stroke:0.12px #ffffff;"></div>
<div class="f" style="left:530.6px;top:466.3px;width:67.4px;background:#ffffff;-webkit-text-stroke:0.12px #ffffff;"></div>
<div class="f cb" style="left:602.5px;top:466.3px;width:75.7px;background:#ffffff;-webkit-text-stroke:0.12px #ffffff;"><div class="dd dis"></div></div>
<div class="f cb" style="left:682.0px;top:466.3px;width:75.0px;background:#ffffff;-webkit-text-stroke:0.12px #ffffff;"><div class="dd dis"></div></div>
<div class="f" style="left:761.0px;top:466.3px;width:20.0px;background:#ffffff;-webkit-text-stroke:0.12px #ffffff;"></div>
<div class="f" style="left:783.7px;top:466.3px;width:63.1px;background:#ffffff;-webkit-text-stroke:0.12px #ffffff;"></div>
<div class="f" style="left:850.0px;top:466.3px;width:30.0px;background:#ffffff;-webkit-text-stroke:0.12px #ffffff;"></div>
<div class="f" style="left:883.0px;top:466.3px;width:30.3px;background:#ffffff;-webkit-text-stroke:0.12px #ffffff;"></div>
<div class="f cb" style="left:916.5px;top:466.3px;width:40.5px;background:#ffffff;-webkit-text-stroke:0.12px #ffffff;"><div class="dd dis"></div></div>
<div class="f" style="left:961.0px;top:466.3px;width:32.0px;background:#ffffff;-webkit-text-stroke:0.12px #ffffff;"></div>
<div class="f cb" style="left:16.5px;top:488.3px;width:295.3px;background:#ffffff;-webkit-text-stroke:0.12px #ffffff;"><div class="dd dis"></div></div>
<div class="f cb" style="left:315.3px;top:488.3px;width:31.5px;background:#ffffff;-webkit-text-stroke:0.12px #ffffff;"><div class="dd dis"></div></div>
<div class="f cb" style="left:351.0px;top:488.3px;width:31.5px;background:#ffffff;-webkit-text-stroke:0.12px #ffffff;"><div class="dd dis"></div></div>
<div class="f cb" style="left:387.0px;top:488.3px;width:31.5px;background:#ffffff;-webkit-text-stroke:0.12px #ffffff;"><div class="dd dis"></div></div>
<div class="f cb" style="left:423.3px;top:488.3px;width:31.9px;background:#ffffff;-webkit-text-stroke:0.12px #ffffff;"><div class="dd dis"></div></div>
<div class="f" style="left:458.0px;top:488.3px;width:68.0px;background:#ffffff;-webkit-text-stroke:0.12px #ffffff;"></div>
<div class="f" style="left:530.6px;top:488.3px;width:67.4px;background:#ffffff;-webkit-text-stroke:0.12px #ffffff;"></div>
<div class="f cb" style="left:602.5px;top:488.3px;width:75.7px;background:#ffffff;-webkit-text-stroke:0.12px #ffffff;"><div class="dd dis"></div></div>
<div class="f cb" style="left:682.0px;top:488.3px;width:75.0px;background:#ffffff;-webkit-text-stroke:0.12px #ffffff;"><div class="dd dis"></div></div>
<div class="f" style="left:761.0px;top:488.3px;width:20.0px;background:#ffffff;-webkit-text-stroke:0.12px #ffffff;"></div>
<div class="f" style="left:783.7px;top:488.3px;width:63.1px;background:#ffffff;-webkit-text-stroke:0.12px #ffffff;"></div>
<div class="f" style="left:850.0px;top:488.3px;width:30.0px;background:#ffffff;-webkit-text-stroke:0.12px #ffffff;"></div>
<div class="f" style="left:883.0px;top:488.3px;width:30.3px;background:#ffffff;-webkit-text-stroke:0.12px #ffffff;"></div>
<div class="f cb" style="left:916.5px;top:488.3px;width:40.5px;background:#ffffff;-webkit-text-stroke:0.12px #ffffff;"><div class="dd dis"></div></div>
<div class="f" style="left:961.0px;top:488.3px;width:32.0px;background:#ffffff;-webkit-text-stroke:0.12px #ffffff;"></div>
<div class="f cb" style="left:16.5px;top:510.3px;width:295.3px;background:#ffffff;-webkit-text-stroke:0.12px #ffffff;"><div class="dd dis"></div></div>
<div class="f cb" style="left:315.3px;top:510.3px;width:31.5px;background:#ffffff;-webkit-text-stroke:0.12px #ffffff;"><div class="dd dis"></div></div>
<div class="f cb" style="left:351.0px;top:510.3px;width:31.5px;background:#ffffff;-webkit-text-stroke:0.12px #ffffff;"><div class="dd dis"></div></div>
<div class="f cb" style="left:387.0px;top:510.3px;width:31.5px;background:#ffffff;-webkit-text-stroke:0.12px #ffffff;"><div class="dd dis"></div></div>
<div class="f cb" style="left:423.3px;top:510.3px;width:31.9px;background:#ffffff;-webkit-text-stroke:0.12px #ffffff;"><div class="dd dis"></div></div>
<div class="f" style="left:458.0px;top:510.3px;width:68.0px;background:#ffffff;-webkit-text-stroke:0.12px #ffffff;"></div>
<div class="f" style="left:530.6px;top:510.3px;width:67.4px;background:#ffffff;-webkit-text-stroke:0.12px #ffffff;"></div>
<div class="f cb" style="left:602.5px;top:510.3px;width:75.7px;background:#ffffff;-webkit-text-stroke:0.12px #ffffff;"><div class="dd dis"></div></div>
<div class="f cb" style="left:682.0px;top:510.3px;width:75.0px;background:#ffffff;-webkit-text-stroke:0.12px #ffffff;"><div class="dd dis"></div></div>
<div class="f" style="left:761.0px;top:510.3px;width:20.0px;background:#ffffff;-webkit-text-stroke:0.12px #ffffff;"></div>
<div class="f" style="left:783.7px;top:510.3px;width:63.1px;background:#ffffff;-webkit-text-stroke:0.12px #ffffff;"></div>
<div class="f" style="left:850.0px;top:510.3px;width:30.0px;background:#ffffff;-webkit-text-stroke:0.12px #ffffff;"></div>
<div class="f" style="left:883.0px;top:510.3px;width:30.3px;background:#ffffff;-webkit-text-stroke:0.12px #ffffff;"></div>
<div class="f cb" style="left:916.5px;top:510.3px;width:40.5px;background:#ffffff;-webkit-text-stroke:0.12px #ffffff;"><div class="dd dis"></div></div>
<div class="f" style="left:961.0px;top:510.3px;width:32.0px;background:#ffffff;-webkit-text-stroke:0.12px #ffffff;"></div>
<div class="a" style="left:685.5px;top:291.8px;width:56.5px;height:16px;border-top:1px dotted #000;border-bottom:1px dotted #000;box-sizing:border-box;"></div>
<svg class="a" style="left:995.7px;top:266.8px" width="17" height="265" viewBox="0 0 17 265"><path d="M1.0 14.4v-6.800a6.600 6.600 0 0 1 14.0 0v6.800z" fill="#e9eef6" stroke="#f7f9fd" stroke-width="0.9"/><path d="M0.8 14.7h14.4" stroke="#5f6684" stroke-width="0.9"/><path d="M4.4 10.5l3.700-4.200l3.700 4.200z" fill="#57576f"/><path d="M1.0 249.4v7.800a6.600 6.600 0 0 0 14.0 0v-7.800z" fill="#e9eef6" stroke="#f7f9fd" stroke-width="0.9"/><path d="M4.4 254.4l3.700 4.200l3.700-4.200z" fill="#57576f"/><rect x="1.6" y="15.2" width="12.8" height="232.8" fill="#e9eef6"/><path d="M1.9 15.2v232.8" stroke="#f7f9fd" stroke-width="0.9"/><path d="M1.4 248.4h13.2" stroke="#7896b8" stroke-width="0.9"/><path d="M9.6 97.6l1.300-1.300M5.0 101.9l1.300-1.300M9.6 106.2l1.300-1.300M5.0 110.5l1.300-1.300M9.6 114.8l1.300-1.300M5.0 119.1l1.300-1.300M9.6 123.4l1.300-1.300M5.0 127.7l1.300-1.300M9.6 132.0l1.300-1.300M5.0 136.3l1.300-1.300M9.6 140.6l1.300-1.300M5.0 144.9l1.300-1.300M9.6 149.2l1.300-1.300M5.0 153.5l1.300-1.300" stroke="#9aa2bc" stroke-width="0.9" fill="none"/><path d="M10.5 98.1l1.300-1.300M5.9 102.4l1.300-1.300M10.5 106.7l1.300-1.300M5.9 111.0l1.300-1.300M10.5 115.3l1.300-1.300M5.9 119.6l1.300-1.300M10.5 123.9l1.300-1.300M5.9 128.2l1.300-1.300M10.5 132.5l1.300-1.300M5.9 136.8l1.300-1.300M10.5 141.1l1.300-1.300M5.9 145.4l1.300-1.300M10.5 149.7l1.300-1.300M5.9 154.0l1.300-1.300" stroke="#ffffff" stroke-width="0.8" fill="none"/></svg>
<div class="l" style="left:15.3px;top:540px;letter-spacing:-0.08px;">Kódy rozhodnutí</div>
<div class="l" style="left:128.5px;top:540px;letter-spacing:0.01px;">Český text s dodatečnými informacemi k nahrávání souboru</div>
<div class="l" style="left:625.5px;top:540px;letter-spacing:0.01px;">Anglický text s dodatečnými informacemi k nahrávání souboru</div>
<div class="l" style="left:15.3px;top:584px;letter-spacing:-0.08px;">Skupina - občanství</div>
<div class="l" style="left:136.0px;top:584px;letter-spacing:-0.23px;">Povolené přípony souborů</div>
<div class="l" style="left:287.0px;top:584px;letter-spacing:-0.04px;">Odkaz na pokyny ke vkládání souborů</div>
<div class="f" style="left:16.0px;top:555.3px;width:108.0px;background:#00ffff;"></div>
<div class="f" style="left:130.0px;top:555.3px;width:492.0px;background:#00ffff;"></div>
<div class="f" style="left:626.0px;top:555.3px;width:381.5px;background:#00ffff;"></div>
<div class="f" style="left:137.0px;top:599.3px;width:144.0px;background:#00ffff;"></div>
<div class="f" style="left:288.5px;top:599.3px;width:417.5px;background:#00ffff;"></div>
<div class="f cb t" style="left:16.0px;top:599.3px;width:114.4px;height:20px;background:#00ffff;-webkit-text-stroke:0.12px #00ffff;"><div class="dd"></div></div>
<div class="a b" style="left:711.6px;top:598.6px;width:298.8px;height:19.9px;box-sizing:border-box;background:#00ffff;border-top:1px solid #9fb4b8;border-left:1px solid #9fb4b8;border-bottom:1px solid #d4e0ee;border-right:1px solid #d4e0ee;text-align:center;color:#959da5;font-size:13px;line-height:18.500px;letter-spacing:0.07px;text-shadow:1px 1px 0 #dde2f4;">Převést z původního způsobu konfigurace</div>
</body></html>
